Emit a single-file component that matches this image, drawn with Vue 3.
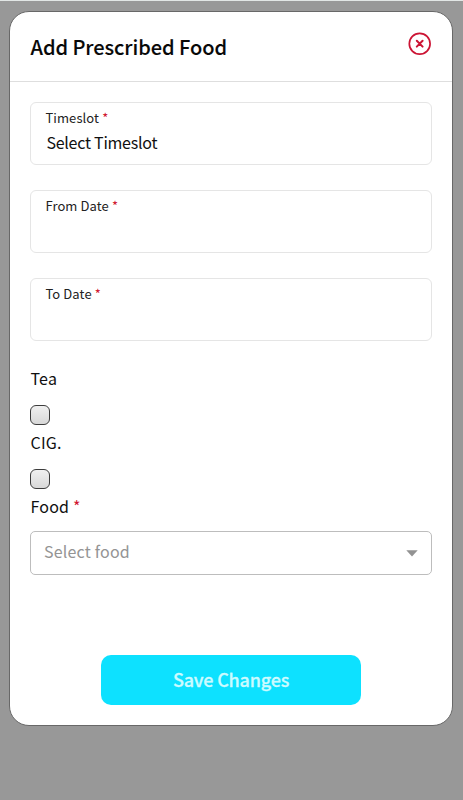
<script setup>
import { ref } from 'vue'

const fields = [
  { label: 'Timeslot', value: 'Select Timeslot' },
  { label: 'From Date', value: '' },
  { label: 'To Date', value: '' },
]
const checks = ref([
  { label: 'Tea', checked: false },
  { label: 'CIG.', checked: false },
])
</script>

<template>
  <div class="backdrop">
    <section class="modal">
      <header class="head">
        <h1 class="title">Add Prescribed Food</h1>
        <button class="close" type="button">
          <svg width="24" height="24" viewBox="0 0 24 24" fill="none" stroke="#cc1434">
            <circle cx="11.7" cy="11.7" r="10.4" stroke-width="1.7" />
            <path d="M8.8 8.8L14.6 14.6M14.6 8.8L8.8 14.6" stroke-width="2" stroke-linecap="round" />
          </svg>
        </button>
      </header>
      <form class="body" @submit.prevent>
        <div v-for="f in fields" :key="f.label" class="field">
          <div class="field-label">{{ f.label }} <span class="req">*</span></div>
          <div class="field-value">{{ f.value }}</div>
        </div>
        <div class="checks">
          <label v-for="c in checks" :key="c.label" class="check">
            <span class="label">{{ c.label }}</span>
            <input v-model="c.checked" class="box" type="checkbox" />
          </label>
        </div>
        <div class="label food">Food <span class="req">*</span></div>
        <div class="select">
          <span class="placeholder">Select food</span>
          <svg class="arrow" width="12" height="7" viewBox="0 0 12 7"><path d="M0.3 0.3H11.7L6 6.4Z" fill="#929292" /></svg>
        </div>
        <button class="save" type="submit">Save Changes</button>
      </form>
    </section>
  </div>
</template>

<style>
body {
  margin: 0;
  background: #989898;
}
</style>

<style scoped>
.backdrop {
  box-sizing: border-box;
  height: 800px;
  padding: 10px 10px 0 9px;
  background: #989898;
  border-top: 1px solid #e2e6e5;
  font-family: "Noto Sans CJK SC", "Noto Sans", sans-serif;
  color: #101010;
}
.modal {
  box-sizing: border-box;
  height: 715px;
  background: #fff;
  border: 1px solid #686868;
  border-radius: 20px;
}
.head {
  box-sizing: border-box;
  height: 70px;
  padding: 0 20px;
  display: flex;
  justify-content: space-between;
  border-bottom: 1px solid #dedede;
}
.title {
  margin: 20px 0 0;
  padding-left: 0.5px;
  font-size: 20px;
  line-height: 30px;
  font-weight: 500;
  letter-spacing: -0.05px;
  color: #080808;
  -webkit-text-stroke: 0.1px #080808;
  white-space: nowrap;
}
.close {
  width: 24px;
  height: 24px;
  margin-top: 20px;
  padding: 0;
  border: 0;
  background: none;
}
.close svg {
  display: block;
}
.body {
  padding: 20px 20px 0;
  display: flex;
  flex-direction: column;
}
.field {
  box-sizing: border-box;
  height: 63px;
  margin-bottom: 25px;
  padding: 6px 15px 0 14.4px;
  border: 1px solid #e5e5e5;
  border-radius: 6px;
}
.field:nth-child(3) {
  margin-bottom: 24px;
}
.field-label {
  font-size: 13px;
  line-height: 18px;
  letter-spacing: 0.1px;
  color: #222;
}
.field-value {
  margin: 3px 0 0 1px;
  font-size: 16px;
  line-height: 24px;
  letter-spacing: -0.25px;
}
.req {
  color: #d0142f;
}
.checks {
  display: flex;
  flex-direction: column;
}
.check {
  height: 64px;
  display: flex;
  flex-direction: column;
}
.label {
  padding-left: 0.5px;
  font-size: 16px;
  line-height: 26px;
  letter-spacing: 0.2px;
}
.box {
  appearance: none;
  box-sizing: border-box;
  width: 20px;
  height: 20px;
  margin: 14px 0 0;
  border: 1px solid #3c3c3c;
  border-radius: 6px;
  background: linear-gradient(#f0f0f0, #d8d8d8);
}
.select {
  box-sizing: border-box;
  height: 44px;
  margin-top: 12px;
  padding: 0 13px;
  display: flex;
  align-items: center;
  justify-content: space-between;
  border: 1px solid #bdbdbd;
  border-radius: 5px;
}
.placeholder {
  margin-bottom: 4px;
  font-size: 16px;
  line-height: 24px;
  letter-spacing: 0.2px;
  color: #949494;
}
.save {
  width: 260px;
  height: 50px;
  margin: 80px auto 0;
  padding: 0 0 2px;
  border: 0;
  border-radius: 10px;
  background: #0de1ff;
  color: #ccfbff;
  font-family: inherit;
  font-size: 18px;
  font-weight: 500;
  letter-spacing: -0.2px;
  -webkit-text-stroke: 0.3px #ccfbff;
}
</style>
